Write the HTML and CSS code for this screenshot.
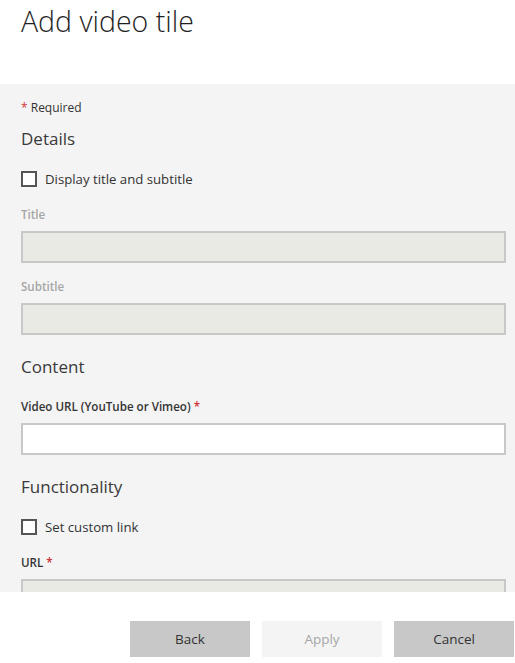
FILE: index.html
```html
<!DOCTYPE html>
<html>
<head>
<meta charset="utf-8">
<link rel="stylesheet" href="styles.css">
</head>
<body>
<div class="header">
  <h1 class="title">Add video tile</h1>
</div>
<div class="panel">
  <div class="required"><span class="star">*</span> Required</div>
  <h2 class="section">Details</h2>
  <label class="check"><span class="box"></span><span>Display title and subtitle</span></label>
  <div class="label disabled">Title</div>
  <div class="input disabled-input"></div>
  <div class="label disabled second">Subtitle</div>
  <div class="input disabled-input"></div>
  <h2 class="section">Content</h2>
  <div class="label">Video URL (YouTube or Vimeo) <span class="star">*</span></div>
  <div class="input"></div>
  <h2 class="section">Functionality</h2>
  <label class="check"><span class="box"></span><span>Set custom link</span></label>
  <div class="label">URL <span class="star">*</span></div>
  <div class="input disabled-input"></div>
</div>
<div class="footer">
  <button class="btn">Back</button>
  <button class="btn btn-disabled">Apply</button>
  <button class="btn">Cancel</button>
</div>
</body>
</html>
```

FILE: styles.css
```css
* { box-sizing: border-box; }
html, body {
  margin: 0;
  padding: 0;
  background: #ffffff;
  font-family: "Open Sans", "Noto Sans", "Liberation Sans", sans-serif;
  color: #333333;
}
body { width: 515px; height: 663px; overflow: hidden; }
.header {
  height: 84px;
  padding: 0 21px;
}
.title {
  margin: 0;
  padding-top: 3px;
  font-size: 28.5px;
  line-height: 36px;
  font-weight: 300;
  color: #1f1f1f;
  letter-spacing: 0;
}
.panel {
  height: 508px;
  background: #f4f4f4;
  padding: 16px 10px 0 21px;
  overflow: hidden;
}
.required {
  font-size: 12px;
  line-height: 16px;
}
.star { color: #d13438; }
.section {
  margin: 20px 0 0;
  font-size: 17px;
  line-height: 24px;
  font-weight: 400;
  color: #3a3a3a;
}
.required + .section { margin-top: 11px; }
.check {
  display: flex;
  align-items: center;
  gap: 8px;
  margin-top: 20px;
  height: 16px;
  font-size: 13.2px;
  line-height: 16px;
  color: #333333;
}
.box {
  width: 16px;
  height: 16px;
  border: 2px solid #555555;
  background: #ffffff;
  flex: none;
}
.label {
  margin-top: 20px;
  font-size: 11.6px;
  line-height: 16px;
  font-weight: 600;
  color: #333333;
}
.label.second { margin-top: 16px; }
.label.disabled { color: #a6a6a6; }
.input {
  margin-top: 8px;
  height: 32px;
  width: 485px;
  border: 2px solid #c8c8c8;
  background: #ffffff;
}
.disabled-input { background: #eaeae4; }
.footer {
  height: 71px;
  display: flex;
  justify-content: flex-end;
  gap: 12px;
  padding: 29px 1px 0 0;
}
.btn {
  width: 120px;
  height: 36px;
  border: none;
  background: #c8c8c8;
  color: #333333;
  font-family: "Open Sans", "Noto Sans", "Liberation Sans", sans-serif;
  font-size: 13.5px;
  padding: 0;
}
.btn-disabled {
  background: #f4f4f4;
  color: #a6a6a6;
}
```
